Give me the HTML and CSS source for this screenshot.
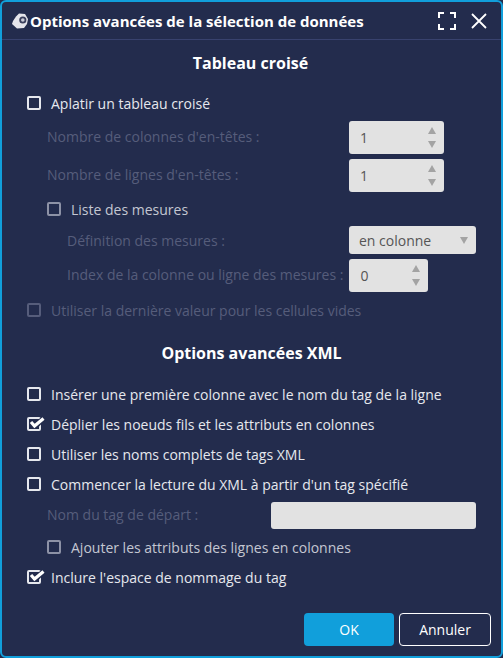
FILE: index.html
```html
<!DOCTYPE html>
<html lang="fr">
<head>
  <meta charset="UTF-8">
  <title>Options avancées de la sélection de données</title>
  <link rel="stylesheet" href="styles.css">
</head>
<body>
  <div class="dialog">
    <div class="dialog-header">
      <svg class="logo" width="16" height="16" viewBox="0 0 16 16">
        <path d="M0 11 L1 8 L4 3.5 L7 0.5 L13 1 L16 6 L15 11 L12 15 L5 15.5 Z" fill="#e4e4ea"/>
        <circle cx="10.8" cy="7" r="3.6" fill="#3a3f5c"/>
        <circle cx="10.8" cy="7" r="1.8" fill="#c9cbd6"/>
      </svg>
      <div class="dialog-title">Options avancées de la sélection de données</div>
      <svg class="head-icon expand" width="18" height="18" viewBox="0 0 18 18" fill="none" stroke="#fff" stroke-width="2">
        <path d="M1 6V1H6M12 1H17V6M17 12V17H12M6 17H1V12"/>
      </svg>
      <svg class="head-icon" width="16" height="16" viewBox="0 0 16 16" fill="none" stroke="#fff" stroke-width="1.8">
        <path d="M1 1L15 15M15 1L1 15"/>
      </svg>
    </div>

    <div class="dialog-body">
      <h2 class="section-title first">Tableau croisé</h2>

      <div class="row check-row gap-top-22">
        <span class="box"></span><label>Aplatir un tableau croisé</label>
      </div>

      <div class="row field-row r-number">
        <span class="field-label disabled">Nombre de colonnes d'en-têtes :</span>
        <div class="spinner"><span class="val">1</span><span class="arrows"><i class="up"></i><i class="down"></i></span></div>
      </div>
      <div class="row field-row r-number2">
        <span class="field-label disabled">Nombre de lignes d'en-têtes :</span>
        <div class="spinner"><span class="val">1</span><span class="arrows"><i class="up"></i><i class="down"></i></span></div>
      </div>

      <div class="row check-row indent r-list">
        <span class="box dim"></span><label class="light">Liste des mesures</label>
      </div>
      <div class="row field-row indent-field r-def">
        <span class="field-label disabled">Définition des mesures :</span>
        <div class="select"><span class="val">en colonne</span><span class="arrows"><i class="down"></i></span></div>
      </div>
      <div class="row field-row indent-field r-index">
        <span class="field-label disabled tight">Index de la colonne ou ligne des mesures :</span>
        <div class="spinner"><span class="val">0</span><span class="arrows"><i class="up"></i><i class="down"></i></span></div>
      </div>

      <div class="row check-row r-last">
        <span class="box off"></span><label class="disabled">Utiliser la dernière valeur pour les cellules vides</label>
      </div>

      <h2 class="section-title second">Options avancées XML</h2>

      <div class="row check-row r-xml1">
        <span class="box"></span><label>Insérer une première colonne avec le nom du tag de la ligne</label>
      </div>
      <div class="row check-row r-xml">
        <span class="box"><svg class="tick" width="18" height="15" viewBox="0 0 18 15" fill="none"><path d="M9 9L15.5 2" stroke="#232c4d" stroke-width="5"/><path d="M3 6L6.5 10L15.5 2.5" stroke="#fff" stroke-width="3.2"/></svg></span><label>Déplier les noeuds fils et les attributs en colonnes</label>
      </div>
      <div class="row check-row r-xml">
        <span class="box"></span><label>Utiliser les noms complets de tags XML</label>
      </div>
      <div class="row check-row r-xml">
        <span class="box"></span><label>Commencer la lecture du XML à partir d'un tag spécifié</label>
      </div>
      <div class="row field-row r-tag">
        <span class="field-label disabled">Nom du tag de départ :</span>
        <div class="text-input"></div>
      </div>
      <div class="row check-row indent r-attr">
        <span class="box dim"></span><label class="light">Ajouter les attributs des lignes en colonnes</label>
      </div>
      <div class="row check-row r-ns">
        <span class="box"><svg class="tick" width="18" height="15" viewBox="0 0 18 15" fill="none"><path d="M9 9L15.5 2" stroke="#232c4d" stroke-width="5"/><path d="M3 6L6.5 10L15.5 2.5" stroke="#fff" stroke-width="3.2"/></svg></span><label>Inclure l'espace de nommage du tag</label>
      </div>
    </div>

    <div class="dialog-footer">
      <button class="btn btn-ok">OK</button>
      <button class="btn btn-cancel">Annuler</button>
    </div>
  </div>
</body>
</html>
```

FILE: styles.css
```css
* {
  box-sizing: border-box;
}

html, body {
  margin: 0;
  padding: 0;
  height: 100%;
}

body {
  font-family: "Open Sans", "Noto Sans", Arial, sans-serif;
  background-color: #232c4d;
  color: #e6e8ee;
  font-size: 14px;
}

.dialog {
  width: 503px;
  height: 658px;
  background-color: #232c4d;
  border: 2px solid #119fdb;
  border-radius: 6px;
  overflow: hidden;
}

.dialog-header {
  display: flex;
  align-items: center;
  height: 38px;
  padding: 1px 14px 0 10px;
  border-bottom: 1px solid #38426e;
}

.logo {
  flex-shrink: 0;
  margin-right: 2px;
}

.dialog-title {
  flex: 1;
  font-size: 15px;
  font-weight: 700;
  color: #fff;
  white-space: nowrap;
}

.head-icon {
  flex-shrink: 0;
}

.expand {
  margin-right: 15px;
}

.dialog-body {
  padding: 0 25px 0 25px;
}

.section-title {
  margin: 0;
  font-size: 16px;
  font-weight: 700;
  color: #fff;
  text-align: center;
  height: 20px;
  line-height: 20px;
}

.section-title.first {
  margin-top: 13px;
  padding-right: 2px;
}

.section-title.second {
  margin-top: 23px;
}

.row {
  display: flex;
  align-items: center;
}

.check-row {
  height: 20px;
}

.gap-top-22 {
  margin-top: 20px;
}

.box {
  position: relative;
  flex-shrink: 0;
  width: 14px;
  height: 14px;
  border: 2px solid #e6e8ee;
  border-radius: 2px;
  margin-right: 10px;
}

.box.dim {
  border-color: #8d92a6;
}

.box.off {
  border-color: #565d7b;
}

.tick {
  position: absolute;
  left: -1px;
  top: -3px;
}

.disabled {
  color: #565d7b;
}

.light {
  color: #c4c7d2;
}

.field-row {
  justify-content: space-between;
  padding-left: 20px;
}

.field-label {
  padding-bottom: 2px;
}

.r-def .field-label {
  padding-bottom: 0;
}

.indent {
  padding-left: 20px;
}

.indent-field {
  padding-left: 40px;
}

.tight {
  margin-right: 6px;
}

.r-number {
  margin-top: 8px;
  padding-right: 32px;
}

.r-number2 {
  margin-top: 5px;
  padding-right: 32px;
}

.r-list {
  margin-top: 7px;
}

.r-def {
  margin-top: 7px;
}

.r-index {
  margin-top: 5px;
  justify-content: flex-start;
}

.r-last {
  margin-top: 8px;
}

.r-xml1 {
  margin-top: 21px;
}

.r-xml {
  margin-top: 10px;
}

.r-tag {
  margin-top: 8px;
}

.r-attr {
  margin-top: 8px;
}

.r-ns {
  margin-top: 10px;
}

.spinner,
.select,
.text-input {
  display: flex;
  align-items: center;
  justify-content: space-between;
  background-color: #e2e2e2;
  border-radius: 3px;
  color: #555;
}

.spinner {
  width: 95px;
  height: 33px;
}

.r-index .spinner {
  width: 79px;
}

.select {
  width: 127px;
  height: 28px;
}

.text-input {
  width: 205px;
  height: 27px;
}

.val {
  padding-left: 11px;
}

.select .val {
  padding-left: 10px;
}

.arrows {
  display: flex;
  flex-direction: column;
  align-items: center;
  gap: 7px;
  width: 24px;
  margin-right: 0;
}

.arrows i {
  display: block;
  width: 0;
  height: 0;
  border-left: 4px solid transparent;
  border-right: 4px solid transparent;
}

.arrows .up {
  border-bottom: 7px solid #a3a3a3;
}

.arrows .down {
  border-top: 7px solid #a3a3a3;
}

.dialog-footer {
  display: flex;
  justify-content: flex-end;
  gap: 5px;
  padding-right: 10px;
  margin-top: 26px;
}

.btn {
  height: 33px;
  width: 90px;
  border-radius: 4px;
  font-family: inherit;
  font-size: 14px;
  color: #fff;
  cursor: pointer;
}

.btn-ok {
  background-color: #119fdb;
  border: none;
}

.btn-cancel {
  width: 92px;
  background-color: transparent;
  border: 1px solid #fff;
}
```
